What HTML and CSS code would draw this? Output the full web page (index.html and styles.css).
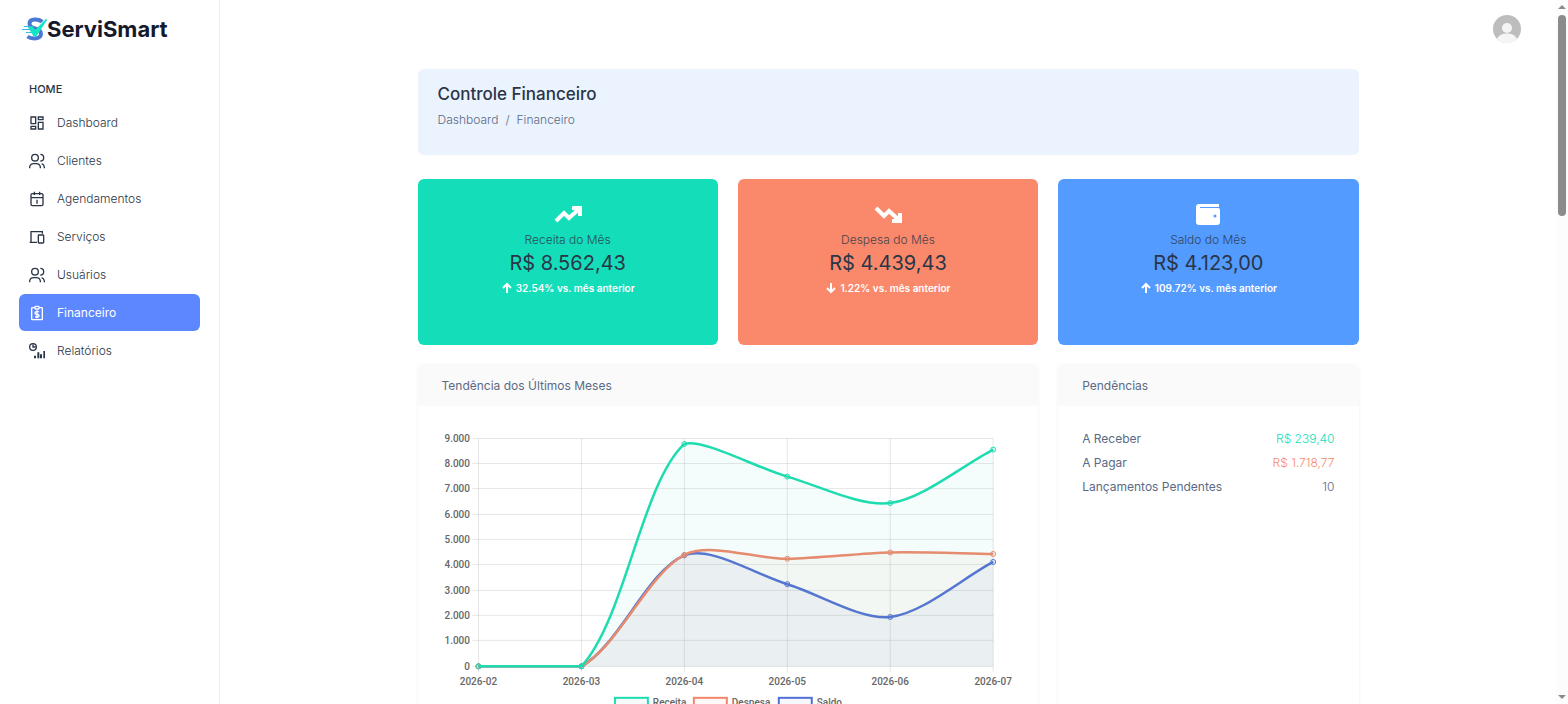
FILE: index.html
```
<!DOCTYPE html>
<html lang="pt-br">
<head>
  <meta charset="UTF-8">
  <meta name="viewport" content="width=device-width, initial-scale=1.0">
  <title>ServiSmart - Controle Financeiro</title>
  <link rel="stylesheet" href="styles.css">
</head>
<body>
  <aside class="sidebar">
    <a class="logo" href="#">
      <svg width="26" height="24" viewBox="0 0 26 24" fill="none">
        <path d="M20 5C18.500 3 16 2.500 13 2.500C9.500 2.500 7.500 4 7.500 6.800C7.500 10 10 10.800 13 11.500C17 12.400 19 13.500 19 16.800C19 20 16 21.500 12.500 21.500C9.500 21.500 7.500 21 5.500 19.500" stroke="#4a78d4" stroke-width="4"/>
        <path d="M7 10.500L10 10L13 14L24.500 2.500L14 18.500Q13 19.500 12 18.500Z" fill="#14e5c4" stroke="#14e5c4" stroke-width="1.500"/>
        <path d="M2 9.500H8M0 12.500H9M4 15.500H10" stroke="#35bde0" stroke-width="1.200"/>
      </svg>
      <span>ServiSmart</span>
    </a>
    <nav>
      <h2 class="nav-title">HOME</h2>
      <ul class="nav-list">
        <li><a href="#">
          <svg class="icon" viewBox="0 0 24 24"><path d="M3 3h7v10H3zM3 17h7v4H3zM14 11h7v10h-7zM14 3h7v4h-7z"/></svg>
          Dashboard</a></li>
        <li><a href="#">
          <svg class="icon" viewBox="0 0 24 24"><circle cx="9" cy="7" r="5"/><path d="M1 23v-2a6 6 0 0 1 6-5h4a6 6 0 0 1 6 5v2M17 2a5 5 0 0 1 0 10M19 16a6 6 0 0 1 4 5v2"/></svg>
          Clientes</a></li>
        <li><a href="#">
          <svg class="icon" viewBox="0 0 24 24"><rect x="3" y="4" width="18" height="18" rx="2"/><path d="M8 1v5M16 1v5M3 10h18M11 14h1v5"/></svg>
          Agendamentos</a></li>
        <li><a href="#">
          <svg class="icon" viewBox="0 0 24 24"><path d="M12 20H3V4h17v3M1 20h11"/><rect x="14" y="9" width="8" height="12" rx="1"/></svg>
          Serviços</a></li>
        <li><a href="#">
          <svg class="icon" viewBox="0 0 24 24"><circle cx="9" cy="7" r="5"/><path d="M1 23v-2a6 6 0 0 1 6-5h4a6 6 0 0 1 6 5v2M17 2a5 5 0 0 1 0 10M19 16a6 6 0 0 1 4 5v2"/></svg>
          Usuários</a></li>
        <li><a class="active" href="#">
          <svg class="icon" viewBox="0 0 24 24"><path d="M9 4H5a1 1 0 0 0-1 1v16a1 1 0 0 0 1 1h14a1 1 0 0 0 1-1V5a1 1 0 0 0-1-1h-4"/><rect x="9" y="2" width="6" height="4" rx="1"/><path d="M15 10h-4a2 2 0 0 0 0 4h2a2 2 0 0 1 0 4H9M12 8v12"/></svg>
          Financeiro</a></li>
        <li><a href="#">
          <svg class="icon" viewBox="0 0 24 24"><circle cx="6" cy="6" r="5"/><path d="M6 2v4h4"/><path stroke-width="3" d="M9 19v4M14 14v9M18 17v6M23 12v11"/></svg>
          Relatórios</a></li>
      </ul>
    </nav>
  </aside>

  <main class="page">
    <header class="topbar">
      <button class="avatar" aria-label="Perfil">
        <svg width="28" height="28" viewBox="0 0 28 28">
          <circle cx="14" cy="14" r="14" fill="#bdbdbd"/>
          <circle cx="14" cy="13" r="5" fill="#f5f5f5"/>
          <path d="M4 24C6 20 9 18.500 14 18.500S22 20 24 24A14 14 0 0 1 4 24Z" fill="#f5f5f5"/>
        </svg>
      </button>
    </header>

    <div class="container">
      <section class="page-header">
        <h1>Controle Financeiro</h1>
        <div class="breadcrumb">
          <a href="#">Dashboard</a><span>/</span><span>Financeiro</span>
        </div>
      </section>

      <section class="grid">
        <div class="stat receita">
          <svg width="32" height="32" viewBox="0 0 32 32"><path d="M4 22L12 14L17 19L27 10M20 9H28V17" fill="none" stroke="#fff" stroke-width="4"/></svg>
          <h6>Receita do Mês</h6>
          <h3>R$ 8.562,43</h3>
          <small><svg width="12" height="12" viewBox="0 0 12 12"><path d="M6 11V2M2 6L6 2L10 6"/></svg>32.54% vs. mês anterior</small>
        </div>
        <div class="stat despesa">
          <svg width="32" height="32" viewBox="0 0 32 32"><path d="M4 9L12 17L17 12L27 21M20 22H28V14" fill="none" stroke="#fff" stroke-width="4"/></svg>
          <h6>Despesa do Mês</h6>
          <h3>R$ 4.439,43</h3>
          <small><svg width="12" height="12" viewBox="0 0 12 12"><path d="M6 1V10M2 6L6 10L10 6"/></svg>1.22% vs. mês anterior</small>
        </div>
        <div class="stat saldo">
          <svg width="32" height="32" viewBox="0 0 32 32">
            <path d="M7 5H27V8H8V9H26Q28 9 28 11V23Q28 26 25 26H7Q4 26 4 23V8Q4 5 7 5Z" fill="#fff"/>
            <circle cx="23" cy="17" r="1.500" fill="#539bff"/>
          </svg>
          <h6>Saldo do Mês</h6>
          <h3>R$ 4.123,00</h3>
          <small><svg width="12" height="12" viewBox="0 0 12 12"><path d="M6 11V2M2 6L6 2L10 6"/></svg>109.72% vs. mês anterior</small>
        </div>

        <div class="card wide">
          <div class="card-header">Tendência dos Últimos Meses</div>
          <div class="card-body">
            <svg id="chart" viewBox="0 0 573 290" role="img" aria-label="Receita, despesa e saldo por mês"></svg>
          </div>
        </div>
        <div class="card">
          <div class="card-header">Pendências</div>
          <div class="card-body">
            <dl class="pendencias">
              <div><dt>A Receber</dt><dd class="verde">R$ 239,40</dd></div>
              <div><dt>A Pagar</dt><dd class="vermelho">R$ 1.718,77</dd></div>
              <div><dt>Lançamentos Pendentes</dt><dd>10</dd></div>
            </dl>
          </div>
        </div>
      </section>
    </div>
  </main>

  <div class="scrollbar" aria-hidden="true">
    <i class="seta cima"></i>
    <i class="polegar"></i>
    <i class="seta baixo"></i>
  </div>

  <script>
    const meses = ["2026-02", "2026-03", "2026-04", "2026-05", "2026-06", "2026-07"];
    const series = [
      { nome: "Saldo", cor: "#5170d8", valores: [0, 0, 4385, 3245, 1950, 4123], legenda: 337 },
      { nome: "Despesa", cor: "#f0876b", valores: [0, 0, 4400, 4250, 4500, 4439], legenda: 252 },
      { nome: "Receita", cor: "#1edbb0", valores: [0, 0, 8785, 7495, 6450, 8562], legenda: 173 }
    ];
    const area = { left: 36.5, right: 551.5, top: 8.5, bottom: 236.5 };
    const passo = (area.right - area.left) / 5;
    const px = i => area.left + i * passo;
    const py = v => area.bottom - v * (area.bottom - area.top) / 9000;
    const limitar = y => Math.max(area.top, Math.min(area.bottom, y));

    // curva suave com tensão 0.3
    function curva(pts) {
      const c = pts.map((p, i) => {
        const a = pts[i - 1] || p;
        const b = pts[i + 1] || p;
        const d1 = Math.hypot(p.x - a.x, p.y - a.y);
        const d2 = Math.hypot(b.x - p.x, b.y - p.y);
        const fa = 0.3 * d1 / (d1 + d2);
        const fb = 0.3 * d2 / (d1 + d2);
        return {
          ax: p.x - fa * (b.x - a.x), ay: limitar(p.y - fa * (b.y - a.y)),
          bx: p.x + fb * (b.x - a.x), by: limitar(p.y + fb * (b.y - a.y))
        };
      });
      let d = `M${pts[0].x} ${pts[0].y}`;
      for (let i = 1; i < pts.length; i++) {
        d += `C${c[i - 1].bx} ${c[i - 1].by} ${c[i].ax} ${c[i].ay} ${pts[i].x} ${pts[i].y}`;
      }
      return d;
    }

    let svg = "";
    for (let v = 0; v <= 9000; v += 1000) {
      const y = Math.round(py(v)) - 0.5;
      svg += `<path class="grade" d="M${area.left - 6} ${y}H${area.right}"/>`;
      svg += `<text class="rotulo fim" x="28" y="${y + 4}">${v.toLocaleString("de-DE")}</text>`;
    }
    meses.forEach((m, i) => {
      svg += `<path class="grade" d="M${px(i)} ${area.top}V${area.bottom + 6}"/>`;
      svg += `<text class="rotulo meio" x="${px(i)}" y="255">${m}</text>`;
    });
    series.forEach(s => {
      const pts = s.valores.map((v, i) => ({ x: px(i), y: py(v) }));
      const d = curva(pts);
      svg += `<path d="${d}V${area.bottom}H${area.left}Z" fill="${s.cor}" fill-opacity="0.05"/>`;
      svg += `<path d="${d}" fill="none" stroke="${s.cor}" stroke-width="2.5"/>`;
      pts.forEach(p => {
        svg += `<circle cx="${p.x}" cy="${p.y}" r="2.5" fill="${s.cor}" fill-opacity="0.1" stroke="${s.cor}"/>`;
      });
      svg += `<rect x="${s.legenda}" y="268" width="33" height="10" fill="${s.cor}" fill-opacity="0.05" stroke="${s.cor}" stroke-width="2"/>`;
      svg += `<text class="rotulo" x="${s.legenda + 38}" y="276">${s.nome}</text>`;
    });
    document.getElementById("chart").innerHTML = svg;
  </script>
</body>
</html>
```
FILE: styles.css
```
:root {
  --primary: #5d87ff;
  --dark: #2a3547;
  --text: #5a6a85;
  --green: #13deb9;
  --red: #fa896b;
  --blue: #539bff;
}
* { box-sizing: border-box; margin: 0; padding: 0; }
body {
  display: flex;
  height: 100vh;
  overflow: hidden;
  font-family: Inter, "Liberation Sans", sans-serif;
  font-size: 12px;
  line-height: 18px;
  color: var(--text);
  background: #fff;
}
a { color: inherit; text-decoration: none; }
.sidebar {
  flex: 0 0 220px;
  padding: 0 19px;
  border-right: 1px solid #ebeff2;
}
.logo {
  display: flex;
  align-items: center;
  height: 58px;
  padding-left: 3px;
  font-size: 22px;
  font-weight: 700;
  color: #16192c;
}
.logo span { margin-left: -1px; }
.nav-title {
  margin: 22px 0 6px 10px;
  font-size: 11px;
  line-height: 18px;
  font-weight: 500;
  color: var(--dark);
}
.nav-list {
  display: grid;
  gap: 1px;
  list-style: none;
}
.nav-list a {
  display: flex;
  align-items: center;
  gap: 12px;
  height: 37px;
  padding: 0 10px;
  border-radius: 6px;
  font-weight: 300;
  color: var(--dark);
}
.nav-list a.active {
  background: var(--primary);
  font-weight: 400;
  color: #fff;
}
.icon {
  width: 16px;
  height: 16px;
  fill: none;
  stroke: currentColor;
  stroke-width: 2;
}
.page {
  flex: 1;
  min-width: 0;
  overflow: hidden;
}
.topbar {
  display: flex;
  align-items: center;
  justify-content: flex-end;
  height: 57px;
  padding-right: 35px;
}
.avatar {
  width: 28px;
  height: 28px;
  border: none;
  border-radius: 50%;
  background: none;
  cursor: pointer;
}
.container {
  max-width: 941px;
  margin: 0 auto;
  padding-top: 12px;
}
.page-header {
  min-height: 86px;
  margin-bottom: 24px;
  padding: 13px 20px;
  border-radius: 6px;
  background: #ebf3fe;
}
h1 {
  margin-bottom: 5px;
  font-size: 17px;
  line-height: 24px;
  font-weight: 500;
  color: var(--dark);
}
.breadcrumb {
  display: flex;
  gap: 7px;
  font-weight: 300;
}
.grid {
  display: grid;
  grid-template-columns: repeat(3, 1fr);
  gap: 20px;
}
.stat {
  display: flex;
  flex-direction: column;
  align-items: center;
  min-height: 166px;
  padding-top: 20px;
  border-radius: 6px;
}
.receita { background: var(--green); }
.despesa { background: var(--red); }
.saldo { background: var(--blue); }
.stat h6 {
  font-size: 12px;
  line-height: 18px;
  font-weight: 300;
  color: var(--dark);
  opacity: 0.85;
}
.stat h3 {
  font-size: 20px;
  line-height: 28px;
  font-weight: 400;
  color: var(--dark);
}
.stat small {
  display: flex;
  align-items: center;
  gap: 3px;
  margin-top: 2px;
  font-size: 10px;
  font-weight: 600;
  color: #fff;
}
.stat small svg {
  fill: none;
  stroke: #fff;
  stroke-width: 2;
}
.card {
  border-radius: 6px;
  overflow: hidden;
  box-shadow: 0 0 3px rgba(90, 106, 133, 0.1);
}
.wide { grid-column: span 2; }
.card-header {
  padding: 12px 24px;
  line-height: 17px;
  background: #fafafa;
}
.card-body { padding: 24px; }
#chart {
  display: block;
  width: 100%;
}
.grade { stroke: rgba(0, 0, 0, 0.1); }
.rotulo {
  font-family: Roboto, "Liberation Sans", sans-serif;
  font-size: 10px;
  font-weight: 500;
  fill: #666;
}
.fim { text-anchor: end; }
.meio { text-anchor: middle; }
.pendencias {
  display: grid;
  gap: 6px;
}
.pendencias div {
  display: flex;
  justify-content: space-between;
}
.pendencias dd { font-weight: 300; }
.verde { color: var(--green); }
.vermelho { color: var(--red); }
.scrollbar {
  display: flex;
  flex: 0 0 12px;
  flex-direction: column;
  align-items: center;
  padding: 5px 0;
  background: #fcfcfc;
}
.seta {
  border: 4px solid transparent;
}
.cima {
  border-top: none;
  border-bottom-color: #8b8b8b;
}
.baixo {
  margin-top: auto;
  border-bottom: none;
  border-top-color: #8b8b8b;
}
.polegar {
  width: 8px;
  height: 29%;
  margin-top: 6px;
  border-radius: 4px;
  background: #8b8b8b;
}
```
